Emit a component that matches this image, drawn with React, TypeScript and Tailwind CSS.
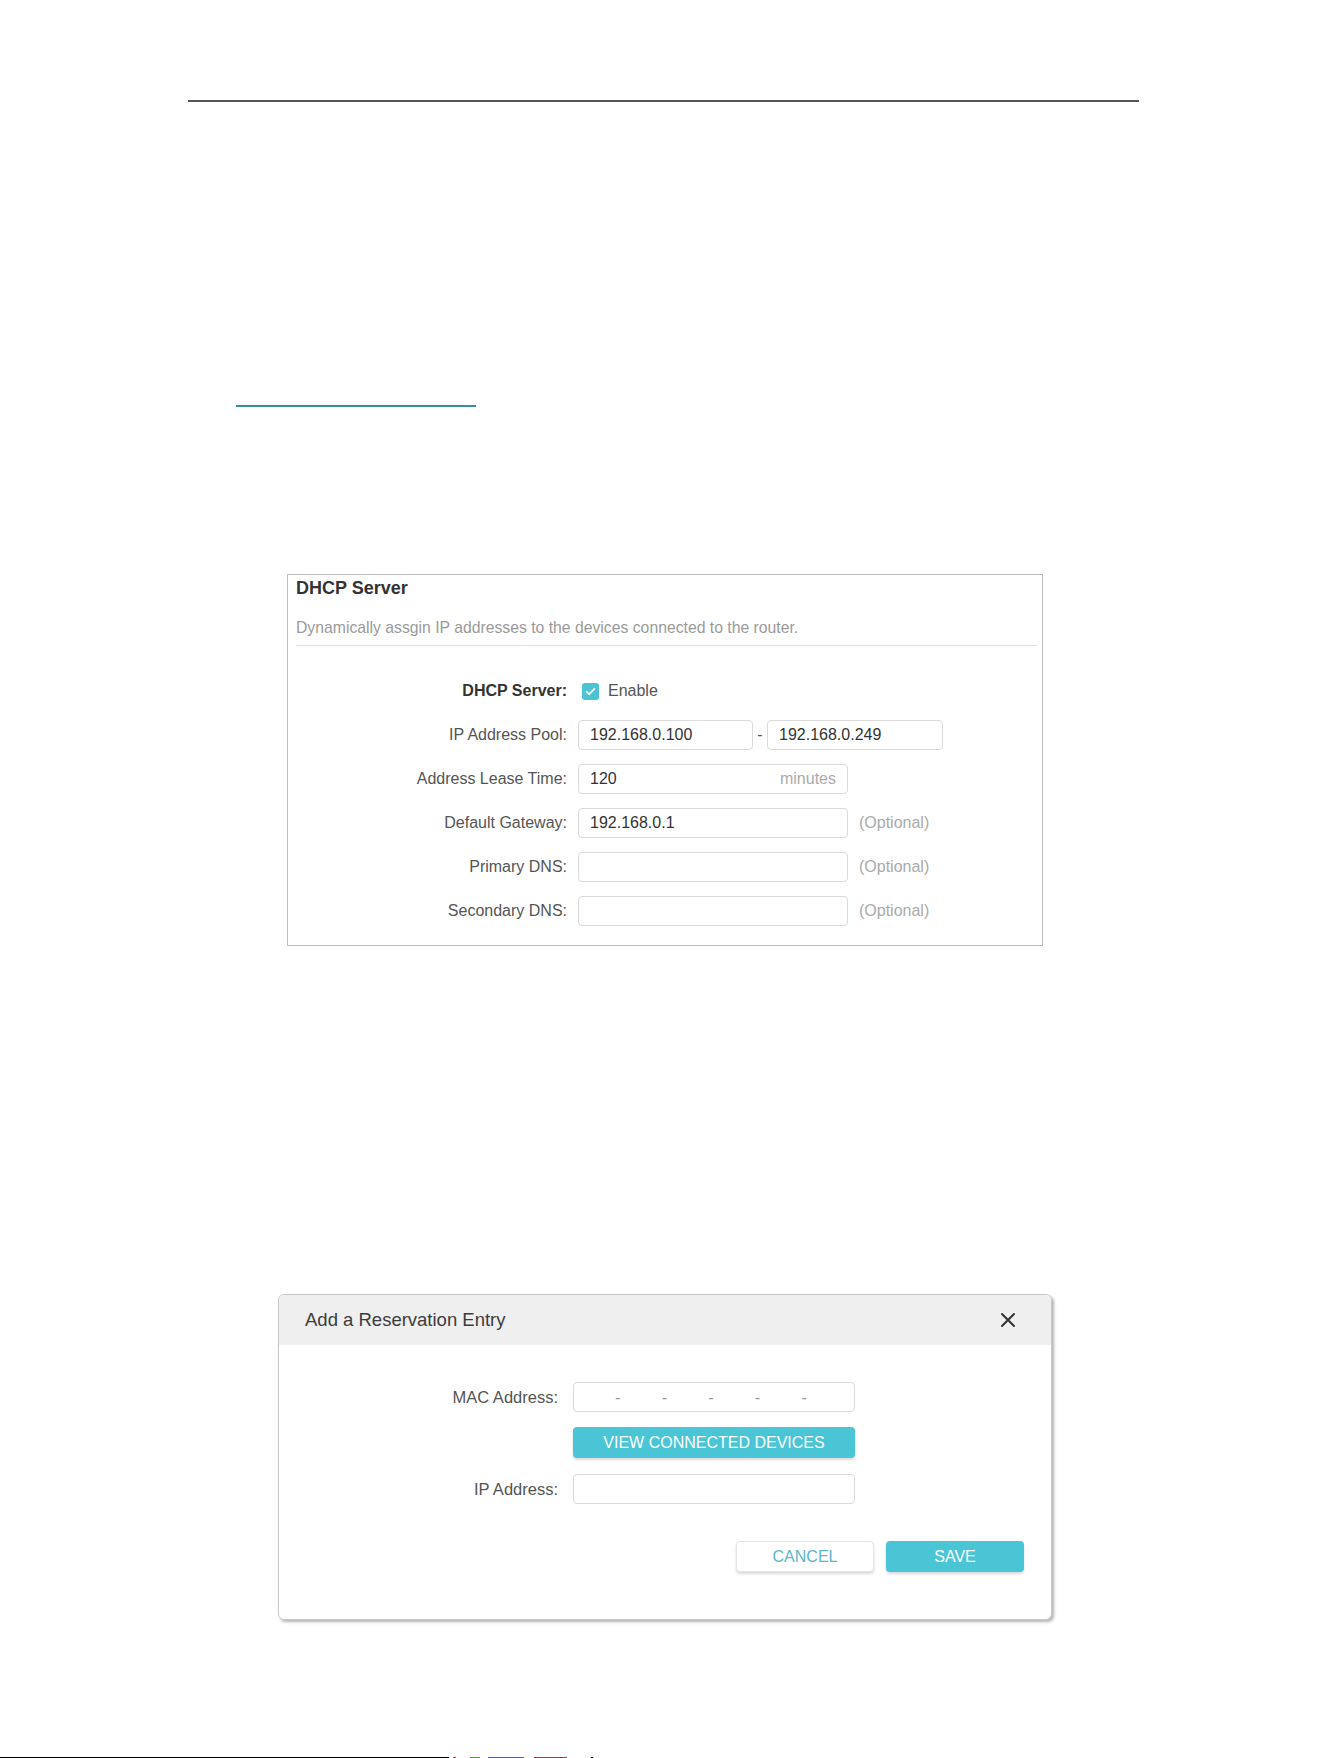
import React from 'react';

const rows = [
  { label: 'Address Lease Time:', value: '120', suffix: 'minutes', width: 'w-[270px]' },
  { label: 'Default Gateway:', value: '192.168.0.1', optional: true, width: 'w-[270px]' },
  { label: 'Primary DNS:', value: '', optional: true, width: 'w-[270px]' },
  { label: 'Secondary DNS:', value: '', optional: true, width: 'w-[270px]' },
];

function Field({ value, className, suffix }: { value: string; className: string; suffix?: string }) {
  return (
    <div
      className={`flex h-[30px] items-center justify-between rounded-[4px] border border-[#dadada] bg-white px-[11px] text-[16px] text-[#333] ${className}`}
    >
      <span>{value}</span>
      {suffix && <span className="text-[#aaa]">{suffix}</span>}
    </div>
  );
}

function DhcpPanel() {
  return (
    <section className="ml-[287px] mt-[167px] flex h-[372px] w-[756px] flex-col border border-[#bdbdbd]">
      <div className="pl-[8px] pr-[5px]">
        <h2 className="h-[26px] text-[18px] font-bold leading-[26px] text-[#333]">DHCP Server</h2>
        <p className="mt-[17px] text-[15.75px] leading-[20px] text-[#9a9a9a]">
          Dynamically assgin IP addresses to the devices connected to the router.
        </p>
        <div className="mt-[7px] h-px bg-[#dcdcdc]" />
      </div>

      <div className="mt-[30px] flex flex-col gap-[14px] text-[16px] text-[#555]">
        <div className="flex h-[30px] items-center">
          <span className="w-[279px] text-right font-bold text-[#333]">DHCP Server:</span>
          <span className="ml-[15px] flex h-[17px] w-[17px] items-center justify-center rounded-[3px] bg-[#4ac3d3]">
            <svg width="11" height="9" viewBox="0 0 11 9" fill="none">
              <path d="M1.5 4.6 4.2 7.2 9.5 1.8" stroke="#fff" strokeWidth="1.8" strokeLinecap="round" strokeLinejoin="round" />
            </svg>
          </span>
          <span className="ml-[9px]">Enable</span>
        </div>

        <div className="flex h-[30px] items-center">
          <span className="w-[279px] text-right">IP Address Pool:</span>
          <Field value="192.168.0.100" className="ml-[11px] w-[175px]" />
          <span className="w-[14px] text-center">-</span>
          <Field value="192.168.0.249" className="w-[176px]" />
        </div>

        {rows.map((r) => (
          <div key={r.label} className="flex h-[30px] items-center">
            <span className="w-[279px] text-right">{r.label}</span>
            <Field value={r.value} suffix={r.suffix} className={`ml-[11px] ${r.width}`} />
            {r.optional && <span className="ml-[11px] text-[#aaa]">(Optional)</span>}
          </div>
        ))}
      </div>
    </section>
  );
}

function ReservationDialog() {
  return (
    <section className="ml-[278px] mt-[348px] flex h-[326px] w-[774px] flex-col overflow-hidden rounded-[6px] border border-[#c9c9c9] bg-white shadow-[2px_2px_3px_rgba(0,0,0,0.3)]">
      <header className="flex h-[50px] items-center justify-between bg-[#efefef] pl-[26px] pr-[35px]">
        <h3 className="text-[18.5px] text-[#3c3c3c]">Add a Reservation Entry</h3>
        <svg width="16" height="16" viewBox="0 0 16 16">
          <path d="M2 2 14 14M14 2 2 14" stroke="#333" strokeWidth="2" strokeLinecap="round" />
        </svg>
      </header>

      <div className="flex flex-col text-[16.5px] text-[#555]">
        <div className="mt-[37px] flex h-[30px] items-center">
          <span className="w-[279px] text-right">MAC Address:</span>
          <div className="ml-[15px] flex h-[30px] w-[282px] items-center justify-evenly rounded-[4px] border border-[#dadada] pr-[6px] text-[#999]">
            <span>-</span>
            <span>-</span>
            <span>-</span>
            <span>-</span>
            <span>-</span>
          </div>
        </div>

        <button className="ml-[294px] mt-[15px] h-[31px] w-[282px] rounded-[4px] bg-[#4ac5d6] text-[16px] text-white shadow-[0_2px_3px_rgba(0,0,0,0.15)]">
          VIEW CONNECTED DEVICES
        </button>

        <div className="mt-[16px] flex h-[30px] items-center">
          <span className="w-[279px] text-right">IP Address:</span>
          <div className="ml-[15px] h-[30px] w-[282px] rounded-[4px] border border-[#dadada]" />
        </div>

        <div className="mt-[37px] flex justify-end gap-[12px] pr-[27px]">
          <button className="h-[31px] w-[138px] rounded-[4px] border border-[#e4e4e4] bg-white text-[16px] text-[#5eb5c6] shadow-[0_2px_3px_rgba(0,0,0,0.15)]">
            CANCEL
          </button>
          <button className="h-[31px] w-[138px] rounded-[4px] bg-[#4ac5d6] text-[16px] text-white shadow-[0_2px_3px_rgba(0,0,0,0.15)]">
            SAVE
          </button>
        </div>
      </div>
    </section>
  );
}

export default function App() {
  return (
    <div className="flex h-[1758px] w-[1330px] flex-col overflow-hidden bg-white font-[family-name:Liberation_Sans,Arial,sans-serif]">
      <div className="ml-[188px] mt-[100px] h-[2px] w-[951px] bg-[#555]" />
      <div className="ml-[236px] mt-[303px] h-[2px] w-[240px] bg-[#3391a6]" />

      <DhcpPanel />
      <ReservationDialog />

      <div className="mt-auto flex h-px items-center">
        <div className="h-px w-[449px] bg-black" />
        <div className="ml-[4px] h-px w-[3px] bg-[#c33]" />
        <div className="ml-[14px] h-px w-[10px] bg-[#3a3]" />
        <div className="ml-[8px] h-px w-[36px] bg-[#55c]" />
        <div className="ml-[10px] h-px w-[33px] bg-[#a35]" />
        <div className="ml-[24px] h-px w-[2px] bg-black" />
      </div>
    </div>
  );
}
